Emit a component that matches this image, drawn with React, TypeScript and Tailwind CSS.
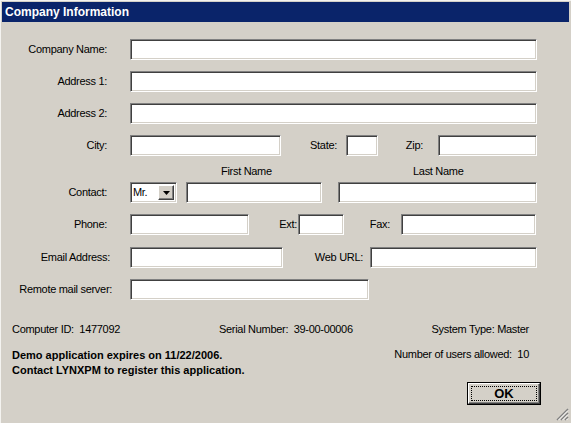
import type { ReactNode } from 'react'

const sunken =
  'h-[21px] bg-white border border-t-[#808080] border-l-[#808080] border-b-white border-r-white shadow-[inset_1px_1px_0_#404040,inset_-1px_-1px_0_#d4d0c8]'

function Field({ w, className = '' }: { w: string; className?: string }) {
  return <div className={`${sunken} ${w} ${className}`} />
}

function Label({ w, children, className = '' }: { w: string; children: ReactNode; className?: string }) {
  return <div className={`${w} text-right shrink-0 ${className}`}>{children}</div>
}

function Row({ children, className = '' }: { children: ReactNode; className?: string }) {
  return <div className={`flex items-center h-[21px] ${className}`}>{children}</div>
}

function TitleSelect() {
  return (
    <div className={`${sunken} w-[47px] ml-[23px] flex items-center justify-between pl-[2px] pr-[2px]`}>
      <span className="text-[11px] leading-none">Mr.</span>
      {/* dropdown arrow button */}
      <div className="w-[16px] h-[15px] bg-[#d4d0c8] border border-t-white border-l-white border-b-[#404040] border-r-[#404040] shadow-[inset_-1px_-1px_0_#808080] flex items-center justify-center">
        <svg width="7" height="4" viewBox="0 0 7 4">
          <path d="M0 0h7L3.5 4z" fill="#000" />
        </svg>
      </div>
    </div>
  )
}

export default function App() {
  return (
    <div
      className="relative w-[571px] h-[423px] bg-[#d4d0c8] text-black text-[11px] tracking-[-0.3px] overflow-hidden border-t border-l border-t-[#f4f3f0] border-l-[#f4f3f0]"
      style={{ fontFamily: '"Liberation Sans", Arial, sans-serif' }}
    >
      {/* title bar */}
      <div className="mt-[1px] ml-[1px] mr-[2px] h-[20px] bg-[#0a246a] flex items-center pl-[3px]">
        <span className="text-white font-bold text-[12px] tracking-normal">Company Information</span>
      </div>

      <div className="flex flex-col">
        <Row className="mt-[17px]">
          <Label w="w-[106px]">Company Name:</Label>
          <Field w="w-[407px]" className="ml-[23px]" />
        </Row>
        <Row className="mt-[11px]">
          <Label w="w-[106px]">Address 1:</Label>
          <Field w="w-[407px]" className="ml-[23px]" />
        </Row>
        <Row className="mt-[11px]">
          <Label w="w-[106px]">Address 2:</Label>
          <Field w="w-[407px]" className="ml-[23px]" />
        </Row>
        <Row className="mt-[11px]">
          <Label w="w-[106px]">City:</Label>
          <Field w="w-[151px]" className="ml-[23px]" />
          <Label w="w-[56px]">State:</Label>
          <Field w="w-[32px]" className="ml-[9px]" />
          <Label w="w-[45px]">Zip:</Label>
          <Field w="w-[99px]" className="ml-[15px]" />
        </Row>

        <div className="flex items-center h-[14px] mt-[8px]">
          <span className="ml-[220px] w-[192px]">First Name</span>
          <span>Last Name</span>
        </div>

        <Row className="mt-[4px]">
          <Label w="w-[106px]">Contact:</Label>
          <TitleSelect />
          <Field w="w-[136px]" className="ml-[9px]" />
          <Field w="w-[199px]" className="ml-[16px]" />
        </Row>
        <Row className="mt-[11px]">
          <Label w="w-[106px]">Phone:</Label>
          <Field w="w-[119px]" className="ml-[23px]" />
          <Label w="w-[48px]">Ext:</Label>
          <Field w="w-[46px]" className="ml-[1px]" />
          <Label w="w-[46px]">Fax:</Label>
          <Field w="w-[135px]" className="ml-[11px]" />
        </Row>
        <Row className="mt-[12px]">
          <Label w="w-[109px]">Email Address:</Label>
          <Field w="w-[153px]" className="ml-[20px]" />
          <Label w="w-[80px]">Web URL:</Label>
          <Field w="w-[167px]" className="ml-[7px]" />
        </Row>
        <Row className="mt-[11px]">
          <Label w="w-[111px]">Remote mail server:</Label>
          <Field w="w-[239px]" className="ml-[18px]" />
        </Row>

        {/* system info */}
        <div className="flex items-center h-[14px] mt-[22px]">
          <span className="ml-[11px] w-[207px] whitespace-pre">Computer ID:  1477092</span>
          <span className="whitespace-pre">Serial Number:  39-00-00006</span>
          <span className="ml-auto mr-[42px]">System Type: Master</span>
        </div>

        <div className="flex items-start mt-[12px]">
          <div className="ml-[11px] flex flex-col font-bold tracking-normal leading-[15px]">
            <span>Demo application expires on 11/22/2006.</span>
            <span>Contact LYNXPM to register this application.</span>
          </div>
          <span className="ml-auto mr-[42px] whitespace-pre leading-[13px]">Number of users allowed:  10</span>
        </div>

        <div className="flex justify-end mt-[4px] mr-[30px]">
          <button className="w-[74px] h-[23px] bg-[#d4d0c8] border border-black p-0">
            <div className="w-full h-full border border-t-white border-l-white border-b-[#404040] border-r-[#404040] shadow-[inset_-1px_-1px_0_#808080] flex items-center justify-center p-[2px]">
              <div className="w-full h-full border border-dotted border-black flex items-center justify-center font-bold text-[13px] tracking-normal">
                OK
              </div>
            </div>
          </button>
        </div>
      </div>

      {/* resize grip */}
      <svg className="absolute right-[2px] bottom-[2px]" width="13" height="13" viewBox="0 0 13 13">
        <path d="M12 1L1 12M12 5L5 12M12 9L9 12" stroke="#808080" strokeWidth="1.5" />
        <path d="M12 2.5L2.5 12M12 6.5L6.5 12M12 10.5L10.5 12" stroke="#fff" strokeWidth="1" />
      </svg>
    </div>
  )
}
